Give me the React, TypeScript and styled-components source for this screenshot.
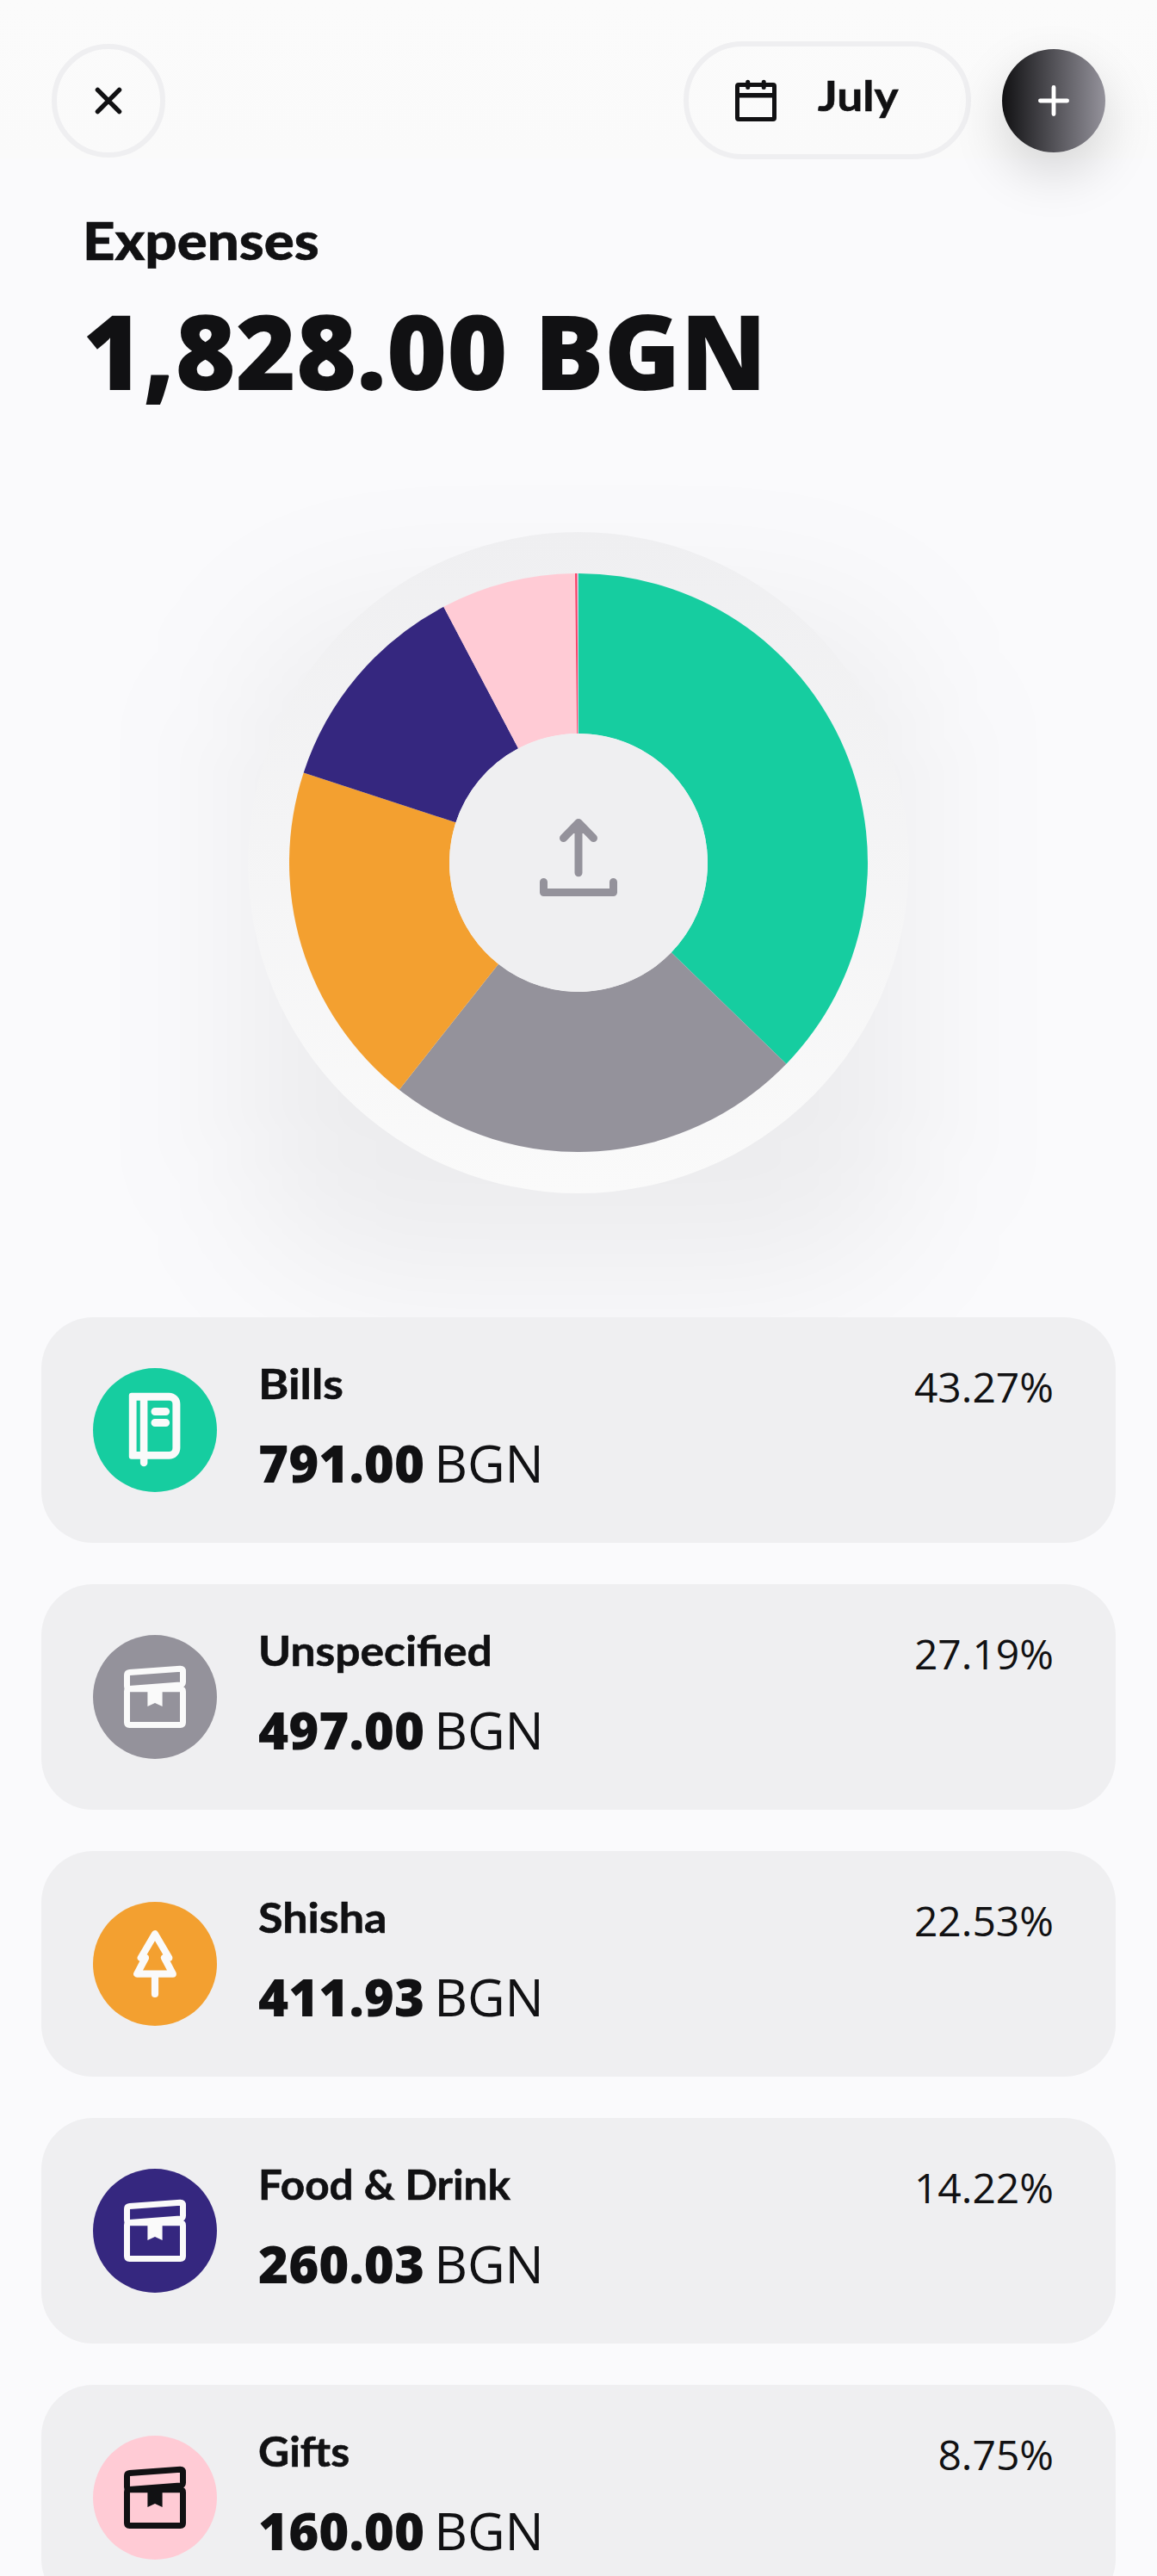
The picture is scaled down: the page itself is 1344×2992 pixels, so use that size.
import React from "react";
import styled, { createGlobalStyle } from "styled-components";

const INK = "#111113";
const PAPER = "#fafafa";
const PANEL = "#efeff1";
const MUTED = "#94929b";

const GlobalStyle = createGlobalStyle`
  html, body { margin: 0; padding: 0; background: #fafafc; }
  * { box-sizing: border-box; }
`;

const Screen = styled.main`
  display: flex;
  flex-direction: column;
  width: 1344px;
  height: 2992px;
  overflow: hidden;
  background: linear-gradient(#fbfbfb 0px, #fafafa 184px, #fafafc 185px, #fafafc 100%);
  color: ${INK};
  font-family: "Open Sans", "Noto Sans", sans-serif;
`;

const TopBar = styled.header`
  display: flex;
  flex: none;
  align-items: center;
  height: 137px;
  margin-top: 48px;
  padding: 0 60px;
`;

const CloseButton = styled.button`
  display: flex;
  align-items: center;
  justify-content: center;
  width: 132px;
  height: 132px;
  margin-right: auto;
  padding: 0;
  border: 6px solid ${PANEL};
  border-radius: 50%;
  background: transparent;
`;

const MonthButton = styled.button`
  display: flex;
  align-items: center;
  width: 334px;
  height: 137px;
  padding: 0 0 0 42px;
  border: 6px solid ${PANEL};
  border-radius: 69px;
  background: transparent;
  color: ${INK};
`;

const Heading = styled.span<{ $size: number; $weight: number; $stretch: number }>`
  display: block;
  font-family: Lato, "Open Sans", sans-serif;
  font-size: ${(p) => p.$size}px;
  font-weight: ${(p) => p.$weight};
  line-height: 1.2;
  transform: scaleX(${(p) => p.$stretch});
  transform-origin: left center;
  -webkit-text-stroke: 0.6px currentColor;
  white-space: nowrap;
`;

const MonthLabel = styled(Heading)`
  margin: -11px 0 0 36px;
`;

const AddButton = styled.button`
  display: flex;
  align-items: center;
  justify-content: center;
  width: 120px;
  height: 120px;
  margin-left: 36px;
  padding: 0;
  border: 0;
  border-radius: 50%;
  background: linear-gradient(90deg, ${INK}, ${MUTED});
  box-shadow: 0 24px 60px rgba(0, 0, 0, 0.15);
`;

const Summary = styled.section`
  flex: none;
  height: 433px;
  padding: 58px 96px 0;
`;

const Total = styled.div`
  margin-top: 10px;
  font-size: 120px;
  font-weight: 800;
  line-height: 164px;
  white-space: nowrap;
`;

const ChartDisc = styled.section`
  position: relative;
  flex: none;
  display: flex;
  align-items: center;
  justify-content: center;
  align-self: center;
  width: 768px;
  height: 768px;
  isolation: isolate;

  &::before {
    content: "";
    position: absolute;
    inset: 94px 0 -94px;
    z-index: -2;
    border-radius: 150px;
    background: rgba(0, 0, 0, 0.056);
    filter: blur(88px);
  }

  &::after {
    content: "";
    position: absolute;
    inset: 0;
    z-index: -1;
    border-radius: 50%;
    background: linear-gradient(${PANEL}, ${PAPER});
  }
`;

const List = styled.ul`
  position: relative;
  display: flex;
  flex: none;
  flex-direction: column;
  gap: 48px;
  margin: 144px 48px 0;
  padding: 0;
  list-style: none;
`;

const Card = styled.li`
  display: flex;
  flex: none;
  align-items: center;
  height: 262px;
  padding: 0 72px 0 60px;
  border-radius: 60px;
  background: ${PANEL};
`;

const Badge = styled.div<{ $fill: string; $glyph: string }>`
  flex: none;
  width: 144px;
  height: 144px;
  border-radius: 50%;
  background: ${(p) => p.$fill};
  color: ${(p) => p.$glyph};

  svg { display: block; }
`;

const Details = styled.div`
  flex: 1;
  align-self: flex-start;
  padding: 48px 0 0 48px;
`;

const Amount = styled.div`
  display: flex;
  gap: 11px;
  margin-top: 22px;
  font-size: 60px;
  font-weight: 800;
  line-height: 82px;
  white-space: nowrap;
`;

const Currency = styled.span`
  font-weight: 400;
`;

const Share = styled.div`
  align-self: flex-start;
  margin-top: 48px;
  font-size: 48px;
  line-height: 66px;
`;

type Kind = "bill" | "box" | "tree";

const BadgeIcon = ({ kind }: { kind: Kind }) => (
  <svg width="144" height="144" viewBox="0 0 144 144" fill="none" stroke="currentColor" strokeLinejoin="round" strokeLinecap="round">
    {kind === "bill" && (
      <>
        <path
          d="M44.8 28.7H88.4a13 13 0 0 1 13 13V92.7a13 13 0 0 1-13 13H63.4V110a4.25 4.25 0 0 1-8.5 0V105.7H44.8a3 3 0 0 1-3-3V31.7a3 3 0 0 1 3-3ZM50.6 37.7V97H54.8V37.7ZM63.4 37.7V97H88.4a4 4 0 0 0 4-4V41.7a4 4 0 0 0-4-4Z"
          fill="currentColor"
          fillRule="evenodd"
          stroke="none"
        />
        <path d="M72 50.5H84.6M72 63.5H84.6" strokeWidth="9" />
      </>
    )}
    {kind === "box" && (
      <>
        <path d="M42.5 43.6 101.5 39.3Q104.5 39.3 104.5 42.5V54.5Q104.5 57.6 101.5 57.9L42.5 62.4Q39.5 62.4 39.5 59.4V46.8Q39.5 43.9 42.5 43.6Z" strokeWidth="7" />
        <path d="M42.5 62.8H101.5Q104.5 62.8 104.5 65.8V101.5Q104.5 104.5 101.5 104.5H42.5Q39.5 104.5 39.5 101.5V65.8Q39.5 62.8 42.5 62.8Z" strokeWidth="7" />
        <path d="M63.4 60H80.6V83L72 79L63.4 83ZM80 60L103 58.5V64H80Z" fill="currentColor" stroke="none" />
      </>
    )}
    {kind === "tree" && (
      <path d="M72 37.2 55.7 65H61L51.2 83.7H92.8L83 65H88.3ZM72 84V107" strokeWidth="8.2" />
    )}
  </svg>
);

interface Category {
  name: string;
  value: number;
  share: string;
  fill: string;
  glyph: string;
  kind: Kind;
  stretch: number;
}

const categories: Category[] = [
  { name: "Bills", value: 791, share: "43.27%", fill: "#16cda0", glyph: PAPER, kind: "bill", stretch: 1.12 },
  { name: "Unspecified", value: 497, share: "27.19%", fill: MUTED, glyph: PAPER, kind: "box", stretch: 1.075 },
  { name: "Shisha", value: 411.93, share: "22.53%", fill: "#f3a030", glyph: PAPER, kind: "tree", stretch: 1.085 },
  { name: "Food & Drink", value: 260.03, share: "14.22%", fill: "#35277f", glyph: PAPER, kind: "box", stretch: 1.03 },
  { name: "Gifts", value: 160, share: "8.75%", fill: "#ffcbd5", glyph: INK, kind: "box", stretch: 1.04 },
];

const slices = [
  ...categories.map(({ value, fill }) => ({ value, fill })),
  { value: 2.6, fill: "#fb3f66" },
  { value: 1.4, fill: "#c5d4e6" },
];

const point = (radius: number, turn: number) => {
  const a = turn * Math.PI * 2;
  return `${(336 + radius * Math.sin(a)).toFixed(2)} ${(336 - radius * Math.cos(a)).toFixed(2)}`;
};

const Donut = () => {
  const total = slices.reduce((sum, s) => sum + s.value, 0);
  let at = 0;
  return (
    <svg width="672" height="672" viewBox="0 0 672 672">
      {slices.map(({ value, fill }) => {
        const from = at / total;
        at += value;
        const to = at / total;
        return (
          <path
            key={fill}
            fill={fill}
            d={`M${point(336, from)}A336 336 0 0 1 ${point(336, to)}L${point(150, to)}A150 150 0 0 0 ${point(150, from)}Z`}
          />
        );
      })}
      <circle cx="336" cy="336" r="150" fill={PANEL} />
      <path
        d="M336 347.8V289.5M318.5 307.5 336 289.5 353.5 307.5M295.5 358.5V370.5H376.5V358.5"
        fill="none"
        stroke={MUTED}
        strokeWidth="9"
        strokeLinecap="round"
        strokeLinejoin="round"
      />
      <path d="M336 289.5 324 302H348Z" fill={MUTED} />
    </svg>
  );
};

export default function App() {
  return (
    <>
      <GlobalStyle />
      <Screen>
        <TopBar>
          <CloseButton aria-label="Close">
            <svg width="72" height="72" viewBox="0 0 72 72">
              <path d="M23.4 23.4 48.6 48.6M48.6 23.4 23.4 48.6" stroke={INK} strokeWidth="5.4" strokeLinecap="round" />
            </svg>
          </CloseButton>
          <MonthButton>
            <svg width="72" height="72" viewBox="0 0 72 72" fill="none" stroke={INK} strokeLinecap="round">
              <path
                d="M16 15H56a4 4 0 0 1 4 4V56a4 4 0 0 1-4 4H16a4 4 0 0 1-4-4V19a4 4 0 0 1 4-4ZM17 20V27H55V20ZM17 32.6V55H55V32.6Z"
                fill={INK}
                fillRule="evenodd"
                stroke="none"
              />
              <path d="M26.7 14.2V20.6M45.2 14.2V20.6" strokeWidth="5" />
            </svg>
            <MonthLabel $size={48} $weight={700} $stretch={1.11}>July</MonthLabel>
          </MonthButton>
          <AddButton aria-label="Add">
            <svg width="72" height="72" viewBox="0 0 72 72">
              <path d="M36 20.4V51.6M20.4 36H51.6" stroke="#fff" strokeWidth="4.8" strokeLinecap="round" />
            </svg>
          </AddButton>
        </TopBar>
        <Summary>
          <Heading $size={60} $weight={900} $stretch={1.09}>Expenses</Heading>
          <Total>1,828.00 BGN</Total>
        </Summary>
        <ChartDisc>
          <Donut />
        </ChartDisc>
        <List>
          {categories.map((c) => (
            <Card key={c.name}>
              <Badge $fill={c.fill} $glyph={c.glyph}>
                <BadgeIcon kind={c.kind} />
              </Badge>
              <Details>
                <Heading $size={48} $weight={700} $stretch={c.stretch}>{c.name}</Heading>
                <Amount>
                  {c.value.toFixed(2)}
                  <Currency>BGN</Currency>
                </Amount>
              </Details>
              <Share>{c.share}</Share>
            </Card>
          ))}
        </List>
      </Screen>
    </>
  );
}
